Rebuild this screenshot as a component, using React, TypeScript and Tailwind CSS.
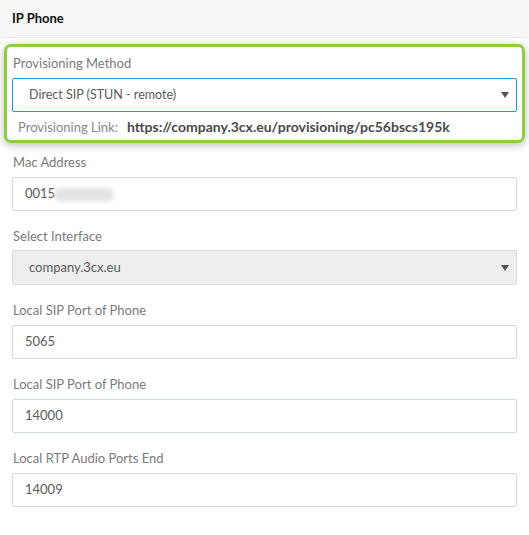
const Arrow = () => (
  <svg width="8" height="6" viewBox="0 0 8 6" className="absolute right-[7px] top-1/2 -translate-y-1/2">
    <path d="M0 0 H8 L4 6 Z" fill="#555" />
  </svg>
);

const Field = ({ label, value, children }: { label: string; value?: string; children?: React.ReactNode }) => (
  <div>
    <div className="h-5 leading-5 mb-[5px] pl-px text-[#7b7b7b]">{label}</div>
    <div className="h-[34px] border border-[#d3dcdc] rounded-[2px] bg-white flex items-center pl-[12px] text-[#5a5a5a]">
      {value}
      {children}
    </div>
  </div>
);

export default function App() {
  return (
    <div className="w-[529px] h-[535px] bg-white text-[13px] overflow-hidden" style={{ fontFamily: 'Lato, "Open Sans", sans-serif' }}>
      <div className="h-[38px] bg-[#f5f6f6] border-b border-[#e9ebeb] flex items-center px-3 font-bold text-[#111]">
        IP Phone
      </div>

      <div className="mx-1 mt-[6px] border-[3px] border-[#8ccf3e] rounded-[7px] shadow-[0_2px_8px_rgba(0,0,0,0.28)] pt-[6px] pb-[3px] px-[5px]">
        <div className="h-5 leading-5 mb-[5px] pl-px text-[#7b7b7b]">Provisioning Method</div>
        <div className="relative h-[34px] border border-[#1e9ad6] rounded-[2px] bg-white flex items-center pl-4 text-[#5a5a5a] text-[12.5px]">
          Direct SIP (STUN - remote)
          <Arrow />
        </div>
        <div className="h-5 leading-5 mt-[5px] pl-[6px] flex items-baseline gap-[9px]">
          <span className="text-[#888]">Provisioning Link:</span>
          <span className="font-bold text-[14px] text-[#4a4a4a]">https://company.3cx.eu/provisioning/pc56bscs195k</span>
        </div>
      </div>

      <div className="px-3 mt-[9px] flex flex-col gap-[15px]">
        <Field label="Mac Address" value="0015">
          <span className="inline-block w-[58px] h-[13px] bg-[#e2e2e2] rounded-sm blur-[2px]" />
        </Field>
        <div>
          <div className="h-5 leading-5 mb-[4px] pl-px text-[#7b7b7b]">Select Interface</div>
          <div className="relative h-[35px] border border-[#d5dddd] rounded-[2px] bg-[#eeeeee] flex items-center pl-4 text-[#5a5a5a]">
            company.3cx.eu
            <Arrow />
          </div>
        </div>
        <Field label="Local SIP Port of Phone" value="5065" />
        <Field label="Local SIP Port of Phone" value="14000" />
        <Field label="Local RTP Audio Ports End" value="14009" />
      </div>
    </div>
  );
}
